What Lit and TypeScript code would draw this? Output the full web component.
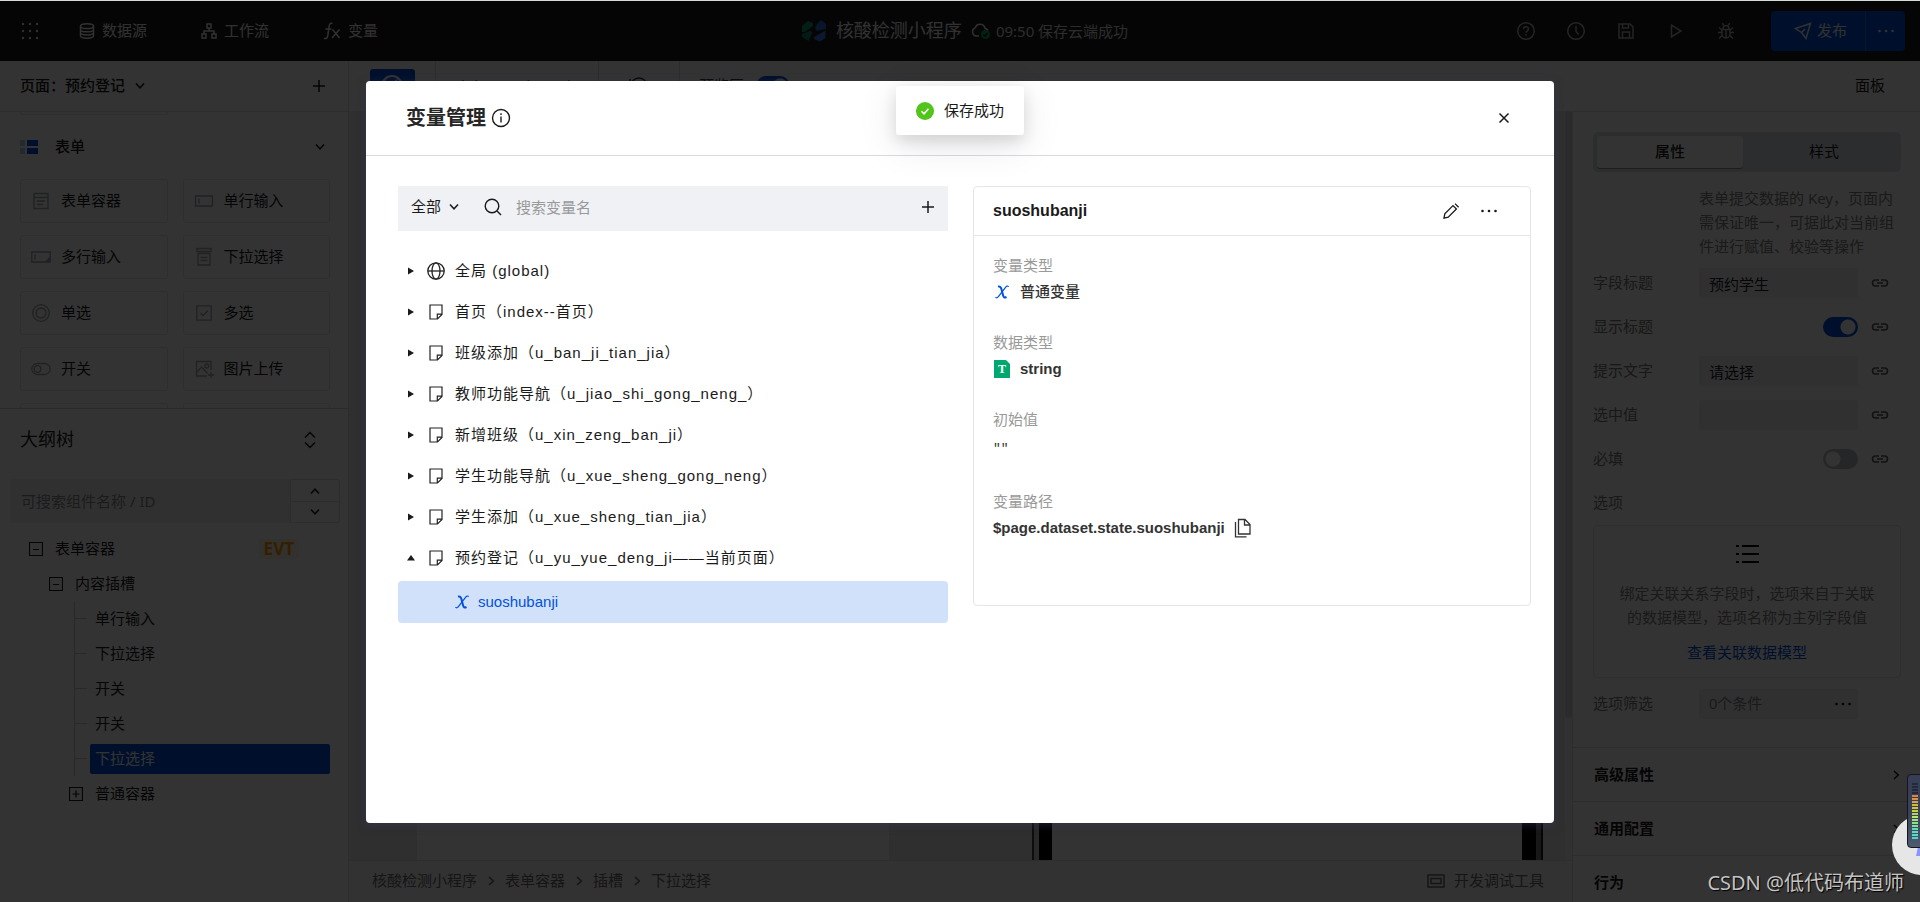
import { LitElement, html, css, svg, nothing } from "lit";
import { customElement, state } from "lit/decorators.js";
import { classMap } from "lit/directives/class-map.js";

const base = css`
  *,
  *::before,
  *::after {
    box-sizing: border-box;
  }
  :host {
    font-family: "Liberation Sans", "Noto Sans CJK SC", sans-serif;
    font-size: 15px;
    line-height: 24px;
    color: #1a1a1a;
  }
  button,
  input,
  select {
    font: inherit;
    color: inherit;
    border: 0;
    margin: 0;
    padding: 0;
    background: none;
    outline: none;
    min-width: 0;
  }
  button {
    display: flex;
    align-items: center;
    cursor: pointer;
  }
  svg {
    display: block;
    flex: none;
    fill: none;
    stroke: currentColor;
  }
  h1,
  h2,
  h3,
  p,
  ul,
  dl,
  dd,
  dt {
    margin: 0;
    padding: 0;
    list-style: none;
    font-size: inherit;
    font-weight: inherit;
  }
`;

const icon = (w: number, h: number, body: unknown, sw = 1.5) =>
  html`<svg width=${w} height=${h} viewBox="0 0 ${w} ${h}" stroke-width=${sw} aria-hidden="true">${body}</svg>`;

const chevronDown = () => icon(12, 12, svg`<path d="M2 3.5 6 7.8 10 3.5"/>`);
const chevronUp = () => icon(12, 12, svg`<path d="M2 8.5 6 4.2 10 8.5"/>`);
const chevronRight = () => icon(12, 12, svg`<path d="M4 2 8.3 6 4 10"/>`);
const plus = () => icon(14, 14, svg`<path d="M7 1v12M1 7h12"/>`);
const dots = () =>
  icon(18, 4, svg`<g fill="currentColor" stroke="none"><circle cx="2.5" cy="2" r="1.3"/><circle cx="9" cy="2" r="1.3"/><circle cx="15.5" cy="2" r="1.3"/></g>`);
const link = () =>
  icon(18, 10, svg`<path d="M8 2H4.5a3 3 0 0 0 0 6H8M10 2h3.500a3 3 0 0 1 0 6H10M6 5h6"/>`);
const appsGrid = () =>
  icon(
    18,
    18,
    svg`<g fill="currentColor" stroke="none">${[2, 9, 16].map((y) => [2, 9, 16].map((x) => svg`<circle cx=${x} cy=${y} r="1.2"/>`))}</g>`
  );
const database = () =>
  icon(16, 16, svg`<ellipse cx="8" cy="3.200" rx="6.500" ry="2.400"/><path d="M1.500 3.200v9.600c0 1.300 2.900 2.400 6.500 2.400s6.500-1.100 6.500-2.400V3.200M1.500 6.400c0 1.300 2.900 2.400 6.500 2.400s6.500-1.100 6.500-2.400M1.500 9.600C1.500 10.900 4.400 12 8 12s6.500-1.100 6.500-2.400"/>`);
const flow = () =>
  icon(16, 16, svg`<path d="M6 1h4v4H6zM1 11h4v4H1zM11 11h4v4h-4zM8 5v3M3 11V8h10v3"/>`);
const fx = () =>
  icon(18, 18, svg`<path d="M9.500 1.500C6.800.6 6.300 2.800 6 5L4.800 13.500C4.500 16 3.500 17 1 16.400M2.500 7h6M9.500 7.500l7 8.500M16.500 7.500l-7.500 8.500"/>`);
const logo = () =>
  icon(
    24,
    22,
    svg`<g stroke="none"><path fill="#0a9a68" d="M0 6 6 1l5 2v3L3 12H0z"/><path fill="#12806a" d="M0 14l9-3.500 1 3L6.500 21 0 17z"/><path fill="#2f6bd8" d="M15 4l4-4 5 4v5l-9 2-2-3z"/><path fill="#3d7be0" d="M23.500 10.500V18L18 21.500 12 19v-2z"/></g>`
  );
const cloudDone = () =>
  icon(20, 18, svg`<path d="M8 14H5.500A4.300 4.300 0 0 1 4.300 5.700 5 5 0 0 1 14 6.200c1.600.3 2.600 1.200 3 2.300"/><circle cx="14.500" cy="12.500" r="4.500" fill="#07a35a" stroke="none"/><path stroke="#111" d="M12.300 12.500l1.700 1.600 2.700-3"/>`);
const help = () =>
  icon(20, 20, svg`<circle cx="10" cy="10" r="8.300"/><path d="M7.500 8.200c0-3.300 5-3.200 5-.3 0 1.900-2.500 1.900-2.500 3.800M10 13.200v1.600"/>`);
const clock = () => icon(20, 20, svg`<circle cx="10" cy="10" r="8.300"/><path d="M10 4.800V10.500l2.600 3"/>`);
const save = () =>
  icon(18, 18, svg`<path d="M2 2h11l3 3v11H2zM5.500 2v4h6V2M5.500 16v-6h7v6"/>`);
const play = () => icon(14, 16, svg`<path d="M2.500 2v12L12 8z"/>`);
const bug = () =>
  icon(18, 18, svg`<path d="M5 7.500h8v4.500a4 4 0 0 1-8 0zM6 7.500C6 2 12 2 12 7.500M9 8v8M5 10.500H1M17 10.500h-4M5 8 2 5.500M13 8l3-2.500M5 13.500l-3 3M13 13.500l3 3M6.500 3.500 5.500 1M11.500 3.500l1-2.500"/>`);
const plane = () => icon(18, 18, svg`<path d="M1.500 6.500 16.500 1.500 12 16.500 7.500 10.500zM7.500 10.500 11 7"/>`);

const glyphs: Record<string, unknown> = {
  form: svg`<path d="M3 2.500h14v15H3zM3 6.500h14M6 10h8M6 13.500h6"/>`,
  input: svg`<path d="M1.500 5h17v10h-17zM5 7.500v5"/>`,
  textarea: svg`<path d="M.8 5h18.400v10H.8zM4 7.500v5"/><path fill="currentColor" stroke="none" d="M19 9.500V15h-5.500z"/>`,
  select: svg`<path d="M3 1.500h14v3H3zM4 6.500h12v11.500H4zM6.500 10.500h7M6.500 13.500h7"/>`,
  radio: svg`<circle cx="10" cy="10" r="8.300"/><circle cx="10" cy="10" r="5"/>`,
  check: svg`<path d="M2.800 2.800h14.400v14.400H2.800zM6.500 10l2.500 2.500 5-5"/>`,
  toggle: svg`<rect x=".8" y="4.500" width="18.400" height="11" rx="5.500"/><circle cx="6.500" cy="10" r="3.300"/>`,
  image: svg`<path d="M13 17H2.500V2.500h14.500V11M3 13l4.500-5 6 6.500M17 13v6M14 16h6"/><circle cx="12.800" cy="7" r="2"/>`,
};

const pageIcon = () =>
  icon(14, 16, svg`<path d="M1 1h12v9.500L8.500 15H1zM13 10.200H8.300V15"/>`, 1.2);
const globe = () =>
  icon(18, 18, svg`<circle cx="9" cy="9" r="8.200"/><ellipse cx="9" cy="9" rx="4" ry="8.200"/><path d="M.8 9h16.400"/>`, 1.3);
const xMark = () =>
  icon(16, 16, svg`<path stroke-width="1.2" d="M1.500 13c.8 1.300 2 1 3.100-.6L11.500 3.400C12.500 2 13.800 1.400 14.600 2.800"/><path stroke-width="2" d="M4 2.600c2-.6 2.900.6 3.400 2.400l1.700 6.500c.5 1.800 1.300 2.500 3.400 1.500"/>`);

@customElement("top-bar")
class TopBar extends LitElement {
  static styles = [
    base,
    css`
      :host {
        display: grid;
        grid-template-columns: 1fr auto 1fr;
        align-items: center;
        height: 60px;
        padding: 0 15px 0 21px;
        background: #191919;
        color: #f2f2f2;
      }
      .nav,
      .tools,
      .title {
        display: flex;
        align-items: center;
      }
      .nav a {
        display: flex;
        align-items: center;
        gap: 7px;
        color: inherit;
        text-decoration: none;
        margin-left: 54px;
      }
      .nav a:first-of-type {
        margin-left: 40px;
      }
      .name {
        font-size: 18px;
        margin: 0 9px 0 10px;
      }
      .title {
        padding-left: 4px;
      }
      .saved {
        font-family: "Noto Sans", "Noto Sans CJK SC", sans-serif;
        color: #dcdcdc;
        margin-left: 5px;
      }
      .tools {
        justify-content: flex-end;
        color: #b4b4b4;
      }
      .tool {
        width: 50px;
        height: 40px;
        justify-content: center;
      }
      .publish {
        display: flex;
        height: 40px;
        margin-left: 20px;
        border-radius: 4px;
        background: #0052d9;
        color: #f2f2f2;
      }
      .publish button + button {
        width: 40px;
        justify-content: center;
        border-left: 1px solid #2a6ae0;
      }
      .go {
        gap: 5px;
        padding: 0 18px 0 23px;
      }
    `,
  ];
  render() {
    const tools: [string, unknown][] = [
      ["帮助", help()],
      ["历史", clock()],
      ["保存", save()],
      ["预览", play()],
      ["调试", bug()],
    ];
    return html`
      <nav class="nav">
        <button aria-label="应用">${appsGrid()}</button>
        <a href="#data">${database()}数据源</a>
        <a href="#flow">${flow()}工作流</a>
        <a href="#var">${fx()}变量</a>
      </nav>
      <div class="title">
        ${logo()}<span class="name">核酸检测小程序</span>${cloudDone()}<span class="saved">09:50 保存云端成功</span>
      </div>
      <div class="tools">
        ${tools.map(([label, g]) => html`<button class="tool" aria-label=${label}>${g}</button>`)}
        <div class="publish">
          <button class="go">${plane()}发布</button>
          <button aria-label="更多发布选项">${dots()}</button>
        </div>
      </div>
    `;
  }
}

@customElement("left-panel")
class LeftPanel extends LitElement {
  static styles = [
    base,
    css`
      :host {
        display: flex;
        flex-direction: column;
        min-height: 0;
        background: #fff;
        border-right: 1px solid #dcdfe6;
      }
      .page {
        display: flex;
        align-items: center;
        height: 50px;
        flex: none;
        padding: 0 22px 0 20px;
        font-weight: 500;
      }
      .page button:first-of-type {
        margin-left: 9px;
      }
      .page button:last-of-type {
        margin-left: auto;
      }
      .widgets {
        flex: none;
        height: 298px;
        overflow: hidden;
        border-top: 1px solid #dcdfe6;
        border-bottom: 1px solid #d4d7de;
        padding: 0 18px 0 20px;
      }
      .cards {
        display: grid;
        grid-template-columns: 1fr 1fr;
        gap: 12px 15px;
      }
      .card {
        height: 44px;
        padding: 0 10px;
        gap: 10px;
        border: 1px solid #e0e3ea;
        border-radius: 3px;
      }
      .card svg {
        color: #9da3b0;
      }
      .prev {
        height: 3px;
        border-top: 0;
        border-radius: 0 0 3px 3px;
      }
      .group {
        display: flex;
        width: 100%;
        align-items: center;
        height: 64px;
        padding-right: 4px;
        font-weight: 500;
      }
      .group svg:last-of-type {
        margin-left: auto;
      }
      .group span {
        margin-left: 17px;
      }
      .outline {
        display: flex;
        align-items: center;
        justify-content: space-between;
        height: 61px;
        flex: none;
        padding: 0 30px 0 20px;
        font-size: 18px;
      }
      .find {
        display: flex;
        height: 44px;
        flex: none;
        margin: 9px 8px 0 10px;
        font-family: "Noto Sans", "Noto Sans CJK SC", sans-serif;
      }
      .find input {
        flex: 1;
        padding: 0 11px;
        background: #f0f1f5;
        border-radius: 3px 0 0 3px;
      }
      .find input::placeholder {
        color: #888;
        opacity: 1;
      }
      .steps {
        display: grid;
        grid-template-rows: 1fr 1fr;
        width: 50px;
        border: 1px solid #d8dbe2;
        border-radius: 0 3px 3px 0;
      }
      .steps button {
        justify-content: center;
      }
      .steps button + button {
        border-top: 1px solid #d8dbe2;
      }
      .tree {
        padding: 8px 18px 0 29px;
      }
      .node {
        display: flex;
        align-items: center;
        height: 35px;
        gap: 12px;
      }
      .l1 {
        padding-left: 20px;
      }
      .l2 {
        padding-left: 40px;
      }
      .evt {
        margin-left: auto;
        margin-right: 31px;
        padding: 0 5px;
        font-family: "Noto Sans", sans-serif;
        font-size: 17px;
        line-height: 20px;
        font-weight: 700;
        color: #ff9d00;
        background: #fff3e2;
        border-radius: 3px;
      }
      .kids {
        margin-left: 45px;
        border-left: 1px solid #c8cbd2;
      }
      .kid {
        display: flex;
        align-items: center;
        height: 35px;
      }
      .kid::before {
        content: "";
        width: 12px;
        margin-right: 3px;
        border-top: 1px solid #c8cbd2;
      }
      .kid button {
        flex: 1;
        height: 30px;
        padding: 0 5px;
        border-radius: 2px;
      }
      .on button {
        background: #0052d9;
        color: #fff;
      }
    `,
  ];
  render() {
    const cards: [string, string][] = [
      ["form", "表单容器"],
      ["input", "单行输入"],
      ["textarea", "多行输入"],
      ["select", "下拉选择"],
      ["radio", "单选"],
      ["check", "多选"],
      ["toggle", "开关"],
      ["image", "图片上传"],
    ];
    const box = (open: boolean) =>
      icon(14, 14, svg`<path d=${open ? "M.5.5h13v13H.5zM4 7.500h6" : "M.5.5h13v13H.5zM3.500 7h7M7 3.500v7"}/>`, 1.2);
    return html`
      <div class="page">
        <span>页面：预约登记</span>
        <button aria-label="切换页面">${chevronDown()}</button>
        <button aria-label="新建页面">${plus()}</button>
      </div>
      <div class="widgets">
        <div class="cards"><div class="card prev"></div></div>
        <button class="group">
          ${icon(18, 14, svg`<g stroke="none"><path fill="#b5c7ee" d="M0 0h5v6H0zM0 8h5v6H0z"/><path fill="#0052d9" d="M7 0h11v6H7zM7 8h11v6H7z"/></g>`)}
          <span>表单</span>${chevronDown()}
        </button>
        <div class="cards">
          ${cards.map(([g, t]) => html`<button class="card">${icon(20, 20, glyphs[g], 1.3)}${t}</button>`)}
          <div class="card"></div>
          <div class="card"></div>
        </div>
      </div>
      <div class="outline">
        <h2>大纲树</h2>
        <button aria-label="折叠">${icon(16, 18, svg`<path d="M3 6.500 8 1.500l5 5M3 11.500l5 5 5-5"/>`)}</button>
      </div>
      <div class="find">
        <input type="text" aria-label="搜索组件" placeholder="可搜索组件名称 / ID" />
        <div class="steps">
          <button aria-label="上一个">${chevronUp()}</button>
          <button aria-label="下一个">${chevronDown()}</button>
        </div>
      </div>
      <div class="tree">
        <div class="node">${box(true)}<span>表单容器</span><span class="evt">EVT</span></div>
        <div class="node l1">${box(true)}<span>内容插槽</span></div>
        <div class="kids">
          ${["单行输入", "下拉选择", "开关", "开关", "下拉选择"].map(
            (t, i) => html`<div class=${classMap({ kid: true, on: i === 4 })}><button>${t}</button></div>`
          )}
        </div>
        <div class="node l2">${box(false)}<span>普通容器</span></div>
      </div>
    `;
  }
}

@customElement("stage-area")
class StageArea extends LitElement {
  static styles = [
    base,
    css`
      :host {
        display: flex;
        flex-direction: column;
        min-width: 0;
        min-height: 0;
        background: #fff;
      }
      .bar {
        display: flex;
        height: 50px;
        flex: none;
      }
      .cell {
        display: flex;
        align-items: center;
        justify-content: center;
        gap: 12px;
        border-right: 1px solid #d8dbe2;
      }
      .c1 {
        width: 87px;
      }
      .c2 {
        width: 163px;
        font-weight: 500;
      }
      .c3 {
        width: 81px;
      }
      .c4 {
        border: 0;
        padding-left: 19px;
      }
      .view {
        width: 45px;
        height: 34px;
        justify-content: center;
        border-radius: 3px;
        background: #0052d9;
        color: #fff;
      }
      .switch {
        appearance: none;
        width: 34px;
        height: 20px;
        border-radius: 10px;
        background: radial-gradient(circle at 24px 10px, #fff 7px, #0052d9 8px);
      }
      .canvas {
        display: flex;
        flex: 1;
        min-height: 0;
        background: #ececee;
        padding-left: 68px;
      }
      .sheet {
        flex: 472 1 0;
        background: #fff;
      }
      .gap {
        flex: 150 1 0;
      }
      .phone {
        flex: none;
        width: 497px;
        border: solid #000;
        border-width: 0 14px 0 13px;
        box-shadow:
          -5px 0 0 #ccc,
          -7px 0 0 #444,
          5px 0 0 #777,
          7px 0 0 #222;
        background: #fcfcfd;
        margin-right: 29px;
      }
      .rail {
        width: 7px;
        background: #f2f2f3;
      }
      .thumb {
        height: 81%;
        border-radius: 3px;
        background: #d6d7d9;
      }
      .foot {
        display: flex;
        align-items: center;
        height: 43px;
        flex: none;
        padding: 0 28px 2px 23px;
        background: #f7f7f8;
        border-top: 1px solid #dcdfe6;
        color: #6b6b6b;
      }
      .crumbs {
        display: flex;
        align-items: center;
        gap: 8px;
        flex: 1;
      }
      .dev {
        gap: 9px;
      }
    `,
  ];
  render() {
    const path = ["核酸检测小程序", "表单容器", "插槽", "下拉选择"];
    return html`
      <div class="bar">
        <div class="cell c1">
          <button class="view" aria-label="画布模式">
            ${icon(24, 24, svg`<circle cx="12" cy="12" r="10"/><path d="M16 7l-6 4-2 6 6-4z"/>`, 2)}
          </button>
        </div>
        <div class="cell c2">iPhone 6 (100%)</div>
        <div class="cell c3">${icon(20, 20, svg`<circle cx="10" cy="10" r="8"/><path d="M1 3v5h5"/>`)}</div>
        <div class="cell c4">
          <label for="preview">预览区</label><input id="preview" class="switch" type="checkbox" checked />
        </div>
      </div>
      <div class="canvas">
        <div class="sheet"></div>
        <div class="gap"></div>
        <div class="phone"></div>
        <div class="rail"><div class="thumb"></div></div>
      </div>
      <div class="foot">
        <div class="crumbs">${path.map((t, i) => html`${i ? chevronRight() : nothing}<span>${t}</span>`)}</div>
        <button class="dev">
          ${icon(18, 14, svg`<path d="M1 1h16v12H1zM4 4.500h10v5H4z"/>`)}开发调试工具
        </button>
      </div>
    `;
  }
}

@customElement("props-panel")
class PropsPanel extends LitElement {
  static styles = [
    base,
    css`
      :host {
        display: flex;
        flex-direction: column;
        min-height: 0;
        overflow: hidden;
        background: #fff;
      }
      .bar {
        height: 50px;
        flex: none;
        padding: 13px 35px 0 0;
        text-align: right;
      }
      .body {
        flex: 1;
        min-height: 0;
        overflow: hidden;
        border-top: 1px solid #dcdfe6;
        border-left: 1px solid #dcdfe6;
      }
      .inner {
        padding: 20px 19px 0 20px;
      }
      .tabs {
        display: grid;
        grid-template-columns: 1fr 1fr;
        gap: 8px;
        height: 40px;
        padding: 4px;
        border-radius: 5px;
        background: #dde2ea;
      }
      .tabs button {
        justify-content: center;
        border-radius: 3px;
      }
      .tabs .on {
        background: #fff;
        font-weight: 500;
        box-shadow: 0 1px 1px rgba(0, 0, 0, 0.4);
      }
      .hint {
        padding: 14px 10px 0 106px;
        color: #808080;
        font-family: "Noto Sans", "Noto Sans CJK SC", sans-serif;
        white-space: nowrap;
      }
      .fields {
        padding-top: 3px;
      }
      .row {
        display: flex;
        align-items: center;
        height: 44px;
        padding-right: 12px;
        color: #777;
      }
      .row label,
      .row .name {
        width: 106px;
        flex: none;
      }
      .row .text {
        flex: 1;
        height: 30px;
        padding: 0 10px;
        border-radius: 3px;
        background: #f0f1f5;
        color: #1a1a1a;
      }
      .row .link {
        margin-left: 13px;
        color: #555;
      }
      .switch {
        appearance: none;
        width: 35px;
        height: 20px;
        margin-left: auto;
        border-radius: 10px;
        background: radial-gradient(circle at 10px 10px, #fff 7px, #b8bcc6 8px);
      }
      .switch:checked {
        background: radial-gradient(circle at 25px 10px, #fff 7px, #0052d9 8px);
      }
      .empty {
        display: flex;
        flex-direction: column;
        align-items: center;
        padding: 14px 20px;
        height: 153px;
        border: 1px solid #e0e3ea;
        border-radius: 4px;
        color: #808080;
        text-align: center;
      }
      .empty svg {
        color: #000;
        margin-bottom: 14px;
      }
      .empty a {
        margin-top: 11px;
        color: #0052d9;
        text-decoration: none;
      }
      .filter .text {
        display: flex;
        align-items: center;
        justify-content: space-between;
        padding: 0 6px 0 10px;
        color: #808080;
      }
      .filter svg {
        color: #111;
      }
      .filter {
        height: 52px;
        padding-right: 43px;
      }
      .sec {
        display: flex;
        align-items: center;
        justify-content: space-between;
        width: 100%;
        height: 54px;
        padding: 0 18px 0 21px;
        border-top: 1px solid #dcdfe6;
        font-weight: 700;
      }
      .secs {
        padding-top: 17px;
      }
    `,
  ];
  render() {
    const rowText = (id: string, name: string, value: string) => html`<div class="row">
      <label for=${id}>${name}</label><input id=${id} class="text" type="text" .value=${value} />
      <button class="link" aria-label="绑定${name}">${link()}</button>
    </div>`;
    const rowSwitch = (id: string, name: string, on: boolean) => html`<div class="row">
      <label for=${id}>${name}</label><input id=${id} class="switch" type="checkbox" ?checked=${on} />
      <button class="link" aria-label="绑定${name}">${link()}</button>
    </div>`;
    return html`
      <div class="bar">面板</div>
      <div class="body">
        <div class="inner">
          <div class="tabs"><button class="on">属性</button><button>样式</button></div>
          <p class="hint">表单提交数据的 Key，页面内<br />需保证唯一，可据此对当前组<br />件进行赋值、校验等操作</p>
          <div class="fields">
            ${rowText("f1", "字段标题", "预约学生")} ${rowSwitch("f2", "显示标题", true)}
            ${rowText("f3", "提示文字", "请选择")} ${rowText("f4", "选中值", "")}
            ${rowSwitch("f5", "必填", false)}
            <div class="row"><span class="name">选项</span></div>
          </div>
          <div class="empty">
            ${icon(26, 28, svg`<path d="M2 6h3M8 6h17M2 14h3M8 14h17M2 22h3M8 22h17"/>`, 2)}
            <p>绑定关联关系字段时，选项来自于关联的数据模型，选项名称为主列字段值</p>
            <a href="#model">查看关联数据模型</a>
          </div>
          <div class="row filter">
            <span class="name">选项筛选</span><button class="text">0个条件${dots()}</button>
          </div>
        </div>
        <div class="secs">
          ${["高级属性", "通用配置", "行为"].map((t) => html`<button class="sec">${t}${chevronRight()}</button>`)}
        </div>
      </div>
    `;
  }
}

@customElement("variable-dialog")
class VariableDialog extends LitElement {
  @state() private open = 7;
  static styles = [
    base,
    css`
      :host {
        display: flex;
        flex-direction: column;
        overflow: hidden;
        background: #fff;
        border-radius: 4px;
        box-shadow: 0 2px 8px rgba(54, 58, 90, 0.5);
      }
      header {
        display: flex;
        align-items: center;
        height: 75px;
        flex: none;
        padding: 0 42px 1px 40px;
        border-bottom: 1px solid #d8dae3;
      }
      h1 {
        font-size: 20px;
        line-height: 30px;
        font-weight: 700;
        margin-right: 5px;
        color: #262626;
      }
      .close {
        margin-left: auto;
      }
      .cols {
        display: grid;
        grid-template-columns: 550fr 558fr;
        gap: 25px;
        align-items: start;
        padding: 30px 23px 0 32px;
      }
      .search {
        display: flex;
        align-items: center;
        height: 45px;
        padding: 0 13px 3px;
        background: #f0f1f5;
      }
      .scope {
        display: grid;
        align-items: center;
      }
      .scope > * {
        grid-area: 1 / 1;
      }
      .scope select {
        appearance: none;
        width: 49px;
        height: 32px;
      }
      .scope svg {
        justify-self: end;
        pointer-events: none;
      }
      .search > svg {
        margin: 0 14px 0 24px;
      }
      .search input {
        flex: 1;
        height: 32px;
      }
      .search input::placeholder {
        color: #999;
        opacity: 1;
      }
      .list {
        padding-top: 19px;
      }
      .item {
        width: 100%;
        height: 41px;
        padding-left: 9px;
        letter-spacing: 1px;
        white-space: nowrap;
      }
      .tri {
        width: 6px;
        margin-right: 14px;
      }
      .ico {
        display: flex;
        justify-content: center;
        width: 18px;
        margin-right: 10px;
        color: #222;
      }
      .leaf {
        width: 100%;
        height: 42px;
        margin-top: 3px;
        padding-left: 56px;
        gap: 8px;
        border-radius: 4px;
        background: #d2e1fa;
        color: #0052d9;
      }
      .detail {
        min-height: 420px;
        border: 1px solid #e3e5ea;
        border-radius: 4px;
      }
      .head {
        display: flex;
        align-items: center;
        gap: 20px;
        height: 49px;
        padding: 0 32px 0 19px;
        border-bottom: 1px solid #e3e5ea;
      }
      .head h2 {
        flex: 1;
        font-size: 16px;
        font-weight: 700;
      }
      dl {
        display: grid;
        gap: 25px;
        padding: 18px 19px;
      }
      dt {
        line-height: 24px;
        color: #999;
      }
      dd {
        display: flex;
        align-items: center;
        height: 28px;
        gap: 9px;
        color: #333;
        font-weight: 700;
      }
      .medium {
        font-weight: 500;
      }
      .plain {
        height: 33px;
        font-weight: 400;
        font-family: "Liberation Mono", monospace;
        font-size: 13px;
      }
      .type {
        display: grid;
        place-items: center;
        width: 18px;
      }
      .type svg {
        grid-area: 1 / 1;
      }
      .type span {
        grid-area: 1 / 1;
        font: 700 12px/18px "Liberation Serif", serif;
        color: #fff;
      }
      .blue {
        color: #0052d9;
      }
    `,
  ];
  render() {
    const pages = [
      "全局 (global)",
      "首页（index--首页）",
      "班级添加（u_ban_ji_tian_jia）",
      "教师功能导航（u_jiao_shi_gong_neng_）",
      "新增班级（u_xin_zeng_ban_ji）",
      "学生功能导航（u_xue_sheng_gong_neng）",
      "学生添加（u_xue_sheng_tian_jia）",
      "预约登记（u_yu_yue_deng_ji——当前页面）",
    ];
    const tri = (down: boolean) =>
      icon(8, 8, svg`<path fill="currentColor" stroke="none" d=${down ? "M0 6.500 4 1l4 5.500z" : "M1 .5v7L7 4z"}/>`);
    return html`
      <header>
        <h1>变量管理</h1>
        ${icon(20, 20, svg`<circle cx="10" cy="10" r="8.500"/><path d="M10 8.500v6M10 5.300v1.600"/>`, 1.4)}
        <button class="close" aria-label="关闭">${icon(16, 16, svg`<path d="M3.500 3.500l9 9M12.500 3.500l-9 9"/>`)}</button>
      </header>
      <div class="cols">
        <section>
          <div class="search">
            <div class="scope">
              <select aria-label="范围"><option>全部</option></select>
              ${chevronDown()}
            </div>
            ${icon(18, 18, svg`<circle cx="8" cy="8" r="6.800"/><path d="M13 13l4 4"/>`, 1.4)}
            <input type="text" aria-label="搜索变量" placeholder="搜索变量名" />
            <button aria-label="新建变量">${plus()}</button>
          </div>
          <div class="list">
            ${pages.map(
              (p, i) => html`<button class="item" @click=${() => (this.open = this.open === i ? -1 : i)}>
                <span class="tri">${tri(this.open === i)}</span><span class="ico">${i ? pageIcon() : globe()}</span>${p}
              </button>`
            )}
            ${this.open === 7 ? html`<button class="leaf">${xMark()}suoshubanji</button>` : nothing}
          </div>
        </section>
        <section class="detail">
          <div class="head">
            <h2>suoshubanji</h2>
            <button aria-label="编辑">
              ${icon(18, 18, svg`<path d="M2 16.200l.8-4.400L11 3.600l3.400 3.400-8.200 8.200zM13 1.600l3.600 3.600"/>`, 1.3)}
            </button>
            <button aria-label="更多">${dots()}</button>
          </div>
          <dl>
            <div>
              <dt>变量类型</dt>
              <dd class="medium"><span class="type blue">${xMark()}</span>普通变量</dd>
            </div>
            <div>
              <dt>数据类型</dt>
              <dd>
                <span class="type"
                  >${icon(16, 18, svg`<path fill="#00a870" stroke="none" d="M0 0h12l4 4v14H0z"/>`)}<span>T</span></span
                >string
              </dd>
            </div>
            <div>
              <dt>初始值</dt>
              <dd class="plain">""</dd>
            </div>
            <div>
              <dt>变量路径</dt>
              <dd>
                $page.dataset.state.suoshubanji
                <button aria-label="复制">
                  ${icon(18, 20, svg`<path d="M4.500 1.500H11l5 5V16H4.500zM10.500 1.500V7H16M1.500 4v14.800h11"/>`, 1.3)}
                </button>
              </dd>
            </div>
          </dl>
        </section>
      </div>
    `;
  }
}

@customElement("app-root")
class AppRoot extends LitElement {
  static styles = [
    base,
    css`
      :host {
        display: flex;
        flex-direction: column;
        position: relative;
        height: 100vh;
        overflow: hidden;
        border-top: 1px solid #d5dcda;
        background: #fff;
      }
      .main {
        display: grid;
        grid-template-columns: 349px 1fr 348px;
        flex: 1;
        min-height: 0;
      }
      .mask {
        position: absolute;
        inset: 0;
        display: flex;
        justify-content: center;
        align-items: flex-start;
        padding-top: 80px;
        background: rgba(0, 0, 0, 0.8);
      }
      variable-dialog {
        width: 90%;
        max-width: 1188px;
        height: calc(100vh - 160px);
      }
      .toast {
        position: absolute;
        top: 85px;
        left: 50%;
        transform: translateX(-50%);
        display: flex;
        align-items: center;
        gap: 10px;
        height: 49px;
        padding: 0 20px;
        white-space: nowrap;
        border-radius: 3px;
        background: #fff;
        box-shadow:
          0 6px 16px rgba(0, 0, 0, 0.12),
          0 9px 40px rgba(0, 0, 0, 0.1);
      }
      .ball {
        position: absolute;
        right: -32px;
        bottom: 28px;
        width: 60px;
        height: 60px;
        border-radius: 50%;
        background: #e6e6e6;
      }
      .meter {
        position: absolute;
        right: -6px;
        bottom: 55px;
        width: 19px;
        height: 74px;
        padding: 8px 4px;
        border: 1px solid #14161c;
        border-radius: 4px;
        background: linear-gradient(#363d54, #3b4358 55%, #4d5a70);
      }
      .mark {
        position: absolute;
        right: 16px;
        bottom: 6px;
        font: 20px/28px "Noto Sans", "Noto Sans CJK SC", sans-serif;
        color: #c4c4c4;
        text-shadow: 1px 1px 1px #000;
      }
    `,
  ];
  render() {
    const ramp = ["#23283a", "#23283a", "#23283a", "#23283a", "#e0803c", "#d8924a", "#d8a544", "#d6b63c", "#d2c43a", "#c8cf3c", "#b4d450", "#c0e070", "#a4e080", "#8ce08a", "#7ae09a", "#62dcae", "#5cdcc0", "#58dcc8", "#50d4c8"];
    return html`
      <top-bar></top-bar>
      <div class="main">
        <left-panel></left-panel>
        <stage-area></stage-area>
        <props-panel></props-panel>
      </div>
      <div class="mask"><variable-dialog role="dialog" aria-label="变量管理"></variable-dialog></div>
      <div class="toast" role="status">
        ${icon(18, 18, svg`<circle cx="9" cy="9" r="9" fill="#52c41a" stroke="none"/><path stroke="#fff" d="M5.500 9.200l2.500 2.600 4.500-5"/>`)}保存成功
      </div>
      <div class="ball">
        ${icon(60, 60, svg`<path fill="#8a94ff" stroke="none" d="M26 32h12v9H24z"/>`)}
      </div>
      <div class="meter">
        ${icon(6, 58, ramp.map((c, i) => svg`<rect x="0" y=${i * 3} width="6" height="2" fill=${c} stroke="none"/>`))}
      </div>
      <div class="mark">CSDN @低代码布道师</div>
    `;
  }
}
